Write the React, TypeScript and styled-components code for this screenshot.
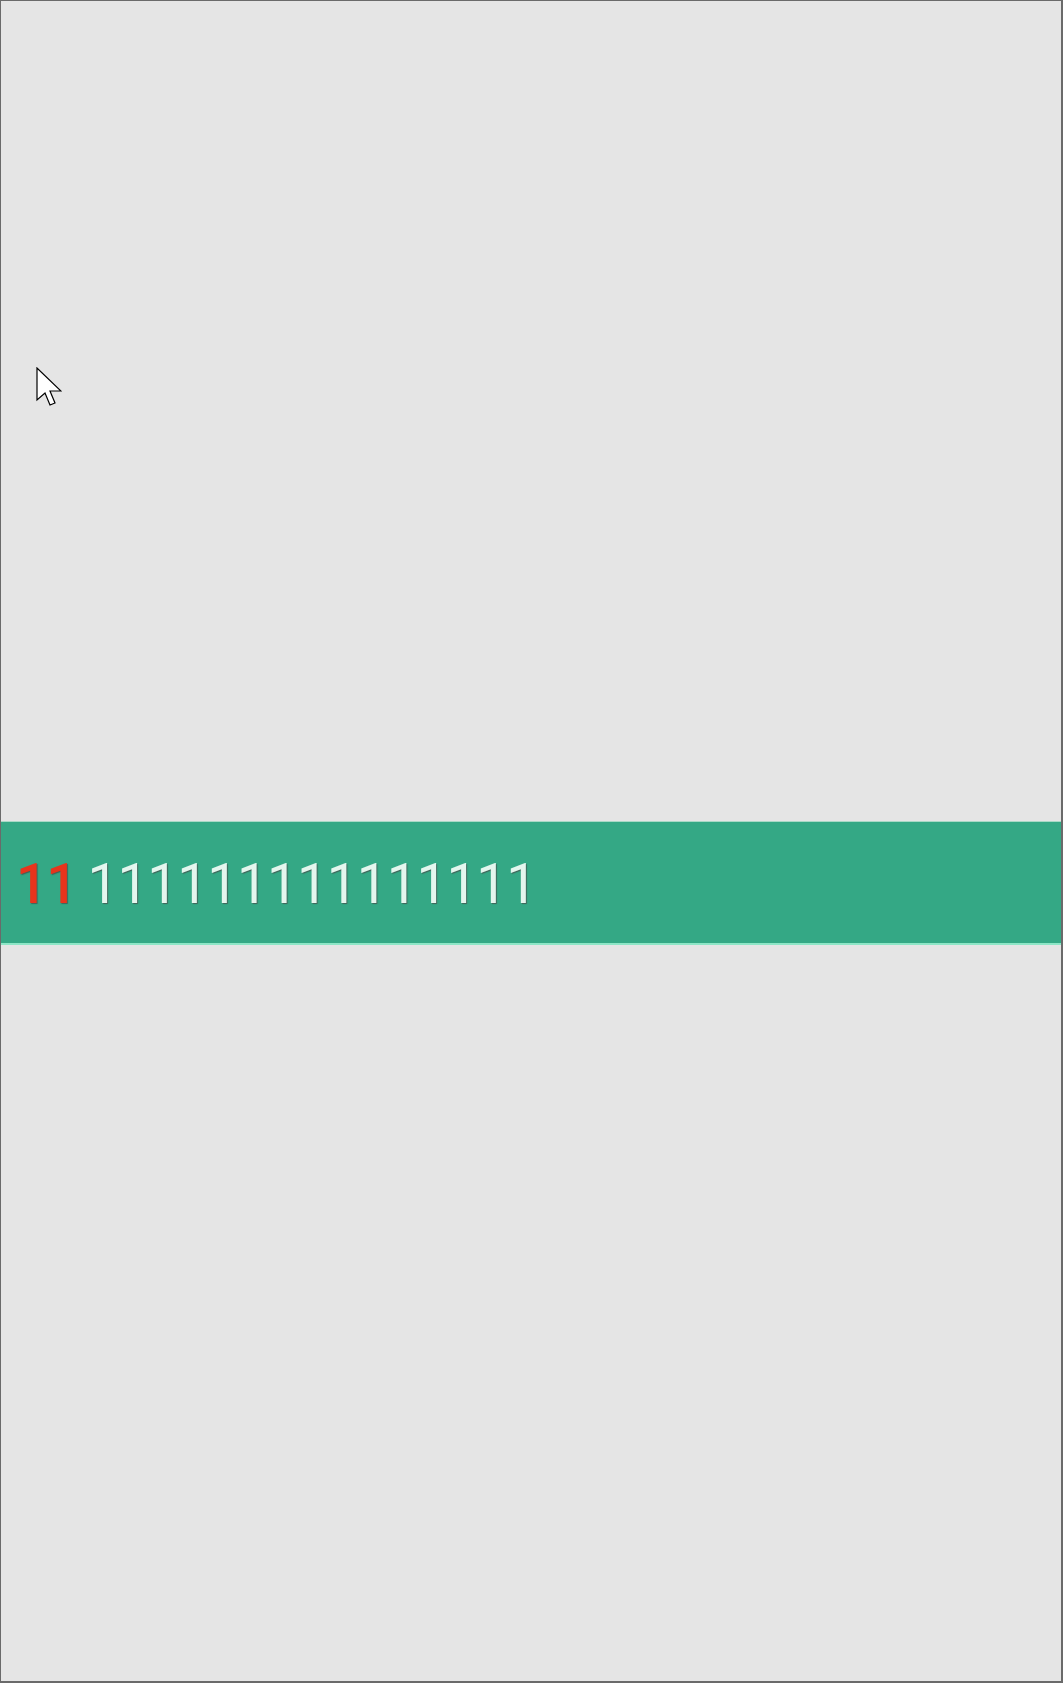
import React from "react";
import styled, { createGlobalStyle } from "styled-components";

const Global = createGlobalStyle`
  html, body { margin: 0; padding: 0; background: #e5e5e5; }
  body { font-family: Roboto, "Liberation Sans", Arial, sans-serif; }
  #root { width: 1063px; height: 1683px; }
`;

const Frame = styled.div`
  position: relative;
  box-sizing: border-box;
  width: 1063px;
  height: 1683px;
  background: #e5e5e5;
  border-top: 1px solid #6a6a6a;
  border-left: 1px solid #6a6a6a;
  border-right: 2px solid #6a6a6a;
  border-bottom: 2px solid #6a6a6a;
  display: flex;
  flex-direction: column;
  padding-top: 820px;
  overflow: hidden;
`;

const Band = styled.div`
  box-sizing: border-box;
  height: 124px;
  background: #34a885;
  border-top: 1px solid #a9d9c6;
  border-bottom: 2px solid #8de6c6;
  display: flex;
  align-items: center;
  padding-left: 15px;
  padding-top: 3px;
  font-family: Roboto, "Liberation Sans", Arial, sans-serif;
  font-size: 55px;
  letter-spacing: -1px;
  line-height: 1;
`;

const Digits = styled.span<{ $accent?: boolean }>`
  color: ${(p) => (p.$accent ? "#e8341c" : "#e4f6ee")};
  font-weight: ${(p) => (p.$accent ? 500 : 400)};
  text-shadow: 1px 1px 1px rgba(70, 70, 70, 0.7);
  margin-left: ${(p) => (p.$accent ? "0" : "11px")};
  white-space: pre;
`;

const Cursor = styled.svg`
  position: absolute;
  left: 35px;
  top: 366px;
  width: 26px;
  height: 40px;
`;

export default function App() {
  return (
    <>
      <Global />
      <Frame>
        <Cursor viewBox="0 0 26 40">
          <path
            d="M1 1 L1 33 L9 26 L14 38 L19 36 L14 24 L25 24 Z"
            fill="#ffffff"
            stroke="#000000"
            strokeWidth="1.2"
            strokeLinejoin="miter"
          />
        </Cursor>
        <Band>
          <Digits $accent>11</Digits>
          <Digits>111111111111111</Digits>
        </Band>
      </Frame>
    </>
  );
}
